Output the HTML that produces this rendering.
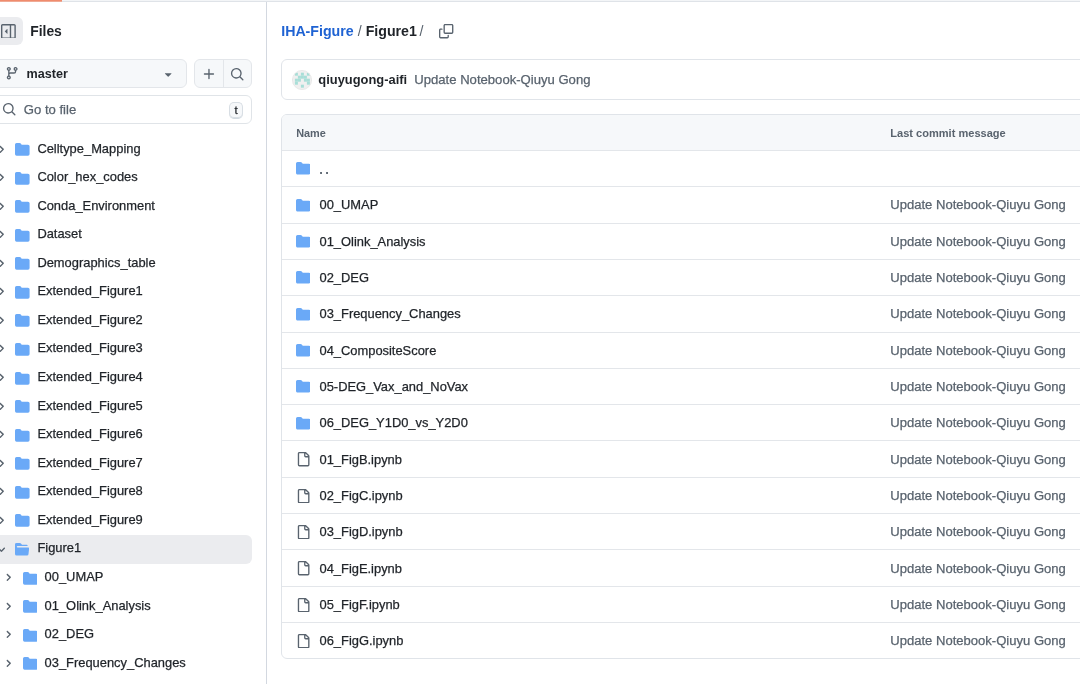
<!DOCTYPE html>
<html><head><meta charset="utf-8"><style>
html,body{margin:0;padding:0;background:#fff;width:1080px;height:684px;overflow:hidden}
body{position:relative;font-family:"Liberation Sans",sans-serif}
#root{position:absolute;left:0;top:0;width:1080px;height:684px;will-change:transform}
.t{position:absolute;white-space:nowrap}
.r{-webkit-text-stroke:0.25px currentColor}
</style></head><body>
<div id="root">
<div style="position:absolute;left:0;top:0;width:1080px;height:1px;background:#f3f5f7"></div>
<div style="position:absolute;left:0;top:1px;width:1080px;height:1px;background:#dfe3e8"></div>
<div style="position:absolute;left:0;top:0;width:62px;height:1px;background:#f08b6d"></div>
<div style="position:absolute;left:0;top:1px;width:62px;height:1px;background:#efaa95"></div>
<div style="position:absolute;left:266px;top:2px;width:1px;height:682px;background:#d3d8e0"></div>
<div style="position:absolute;left:-8px;top:17px;width:30.7px;height:28px;border-radius:6px;background:#ebecef"></div>
<svg style="position:absolute;left:1.1px;top:23.6px;width:14.8px;height:14.8px;fill:#59636e" viewBox="0 0 16 16"><path d="M4.177 7.823 6.573 5.427A.25.25 0 0 1 7 5.604v4.792a.25.25 0 0 1-.427.177L4.177 8.177a.25.25 0 0 1 0-.354Z"/><path d="M0 1.75C0 .784.784 0 1.75 0h12.5C15.216 0 16 .784 16 1.75v12.5A1.75 1.75 0 0 1 14.25 16H1.75A1.75 1.75 0 0 1 0 14.25Zm1.75-.25a.25.25 0 0 0-.25.25v12.5c0 .138.112.25.25.25H9.5v-13Zm12.5 13a.25.25 0 0 0 .25-.25V1.75a.25.25 0 0 0-.25-.25H11v13Z"/></svg>
<div class="t" style="left:30.2px;top:21.0px;height:20px;line-height:20px;font-size:13.9px;font-weight:700;color:#1f2328;">Files</div>
<div style="position:absolute;left:-10px;top:59px;width:197px;height:29px;box-sizing:border-box;border:1px solid #e3e6ea;border-radius:6px;background:#f6f8fa"></div>
<svg style="position:absolute;left:5.2px;top:66.2px;width:14.4px;height:14.4px;fill:#59636e" viewBox="0 0 16 16"><path d="M9.5 3.25a2.25 2.25 0 1 1 3 2.122V6A2.5 2.5 0 0 1 10 8.5H6a1 1 0 0 0-1 1v1.128a2.251 2.251 0 1 1-1.5 0V5.372a2.25 2.25 0 1 1 1.5 0v1.836A2.493 2.493 0 0 1 6 7h4a1 1 0 0 0 1-1v-.628A2.25 2.25 0 0 1 9.5 3.25Zm-6 0a.75.75 0 1 0 1.5 0 .75.75 0 0 0-1.5 0Zm8.25-.75a.75.75 0 1 0 0 1.5.75.75 0 0 0 0-1.5ZM4.25 12a.75.75 0 1 0 0 1.5.75.75 0 0 0 0-1.5Z"/></svg>
<div class="t" style="left:26.6px;top:64.0px;height:20px;line-height:20px;font-size:12.6px;font-weight:700;color:#1f2328;">master</div>
<svg style="position:absolute;left:161.2px;top:67px;width:14.4px;height:14.4px;fill:#59636e" viewBox="0 0 16 16"><path d="m4.427 7.427 3.396 3.396a.25.25 0 0 0 .354 0l3.396-3.396A.25.25 0 0 0 11.396 7H4.604a.25.25 0 0 0-.177.427Z"/></svg>
<div style="position:absolute;left:194px;top:59px;width:58px;height:29px;box-sizing:border-box;border:1px solid #e3e6ea;border-radius:6px;background:#f6f8fa"></div>
<div style="position:absolute;left:223px;top:60px;width:1px;height:27px;background:#e3e6ea"></div>
<svg style="position:absolute;left:202px;top:66.8px;width:14.4px;height:14.4px;fill:#59636e" viewBox="0 0 16 16"><path d="M7.75 2a.75.75 0 0 1 .75.75V7h4.25a.75.75 0 0 1 0 1.5H8.5v4.25a.75.75 0 0 1-1.5 0V8.5H2.75a.75.75 0 0 1 0-1.5H7V2.75A.75.75 0 0 1 7.75 2Z"/></svg>
<svg style="position:absolute;left:229.5px;top:66.5px;width:14.4px;height:14.4px;fill:#59636e" viewBox="0 0 16 16"><path d="M10.68 11.74a6 6 0 0 1-7.922-8.982 6 6 0 0 1 8.982 7.922l3.04 3.04a.749.749 0 0 1-.326 1.275.749.749 0 0 1-.734-.215ZM11.5 7a4.499 4.499 0 1 0-8.997 0A4.499 4.499 0 0 0 11.5 7Z"/></svg>
<div style="position:absolute;left:-10px;top:95px;width:262px;height:29px;box-sizing:border-box;border:1px solid #e0e4e8;border-radius:6px;background:#fff"></div>
<svg style="position:absolute;left:1.6px;top:102.2px;width:14.4px;height:14.4px;fill:#59636e" viewBox="0 0 16 16"><path d="M10.68 11.74a6 6 0 0 1-7.922-8.982 6 6 0 0 1 8.982 7.922l3.04 3.04a.749.749 0 0 1-.326 1.275.749.749 0 0 1-.734-.215ZM11.5 7a4.499 4.499 0 1 0-8.997 0A4.499 4.499 0 0 0 11.5 7Z"/></svg>
<div class="t r" style="left:23.8px;top:99.5px;height:20px;line-height:20px;font-size:13.1px;font-weight:400;color:#59636e;">Go to file</div>
<div style="position:absolute;left:228.8px;top:102px;width:14.5px;height:16.5px;box-sizing:border-box;border:1px solid #d8dee4;border-bottom-color:#d1d9e0;border-radius:5px;background:#f6f8fa;box-shadow:inset 0 -1px 0 #d8dee4"></div>
<div class="t r" style="left:228.8px;top:102px;width:14.5px;height:17px;line-height:17px;text-align:center;font-size:11.5px;color:#1f2328;font-family:'Liberation Sans',sans-serif">t</div>
<svg style="position:absolute;left:-4.5px;top:143.5px;width:10.8px;height:10.8px;fill:#59636e" viewBox="0 0 12 12"><path d="M4.7 10c-.2 0-.4-.1-.5-.2-.3-.3-.3-.8 0-1.1L6.9 6 4.2 3.3c-.3-.3-.3-.8 0-1.1.3-.3.8-.3 1.1 0l3.3 3.2c.3.3.3.8 0 1.1L5.3 9.7c-.2.2-.4.3-.6.3Z"/></svg>
<svg style="position:absolute;left:15.3px;top:142.0px;width:14.6px;height:14.6px;fill:#6aa9f7" viewBox="0 0 16 16"><path d="M1.75 1A1.75 1.75 0 0 0 0 2.75v10.5C0 14.216.784 15 1.75 15h12.5A1.75 1.75 0 0 0 16 13.25v-8.5A1.75 1.75 0 0 0 14.25 3H7.5a.25.25 0 0 1-.2-.1l-.9-1.2C6.07 1.26 5.55 1 5 1H1.75Z"/></svg>
<div class="t r" style="left:37.4px;top:138.5px;height:20px;line-height:20px;font-size:12.9px;font-weight:400;color:#1f2328;">Celltype_Mapping</div>
<svg style="position:absolute;left:-4.5px;top:172.07px;width:10.8px;height:10.8px;fill:#59636e" viewBox="0 0 12 12"><path d="M4.7 10c-.2 0-.4-.1-.5-.2-.3-.3-.3-.8 0-1.1L6.9 6 4.2 3.3c-.3-.3-.3-.8 0-1.1.3-.3.8-.3 1.1 0l3.3 3.2c.3.3.3.8 0 1.1L5.3 9.7c-.2.2-.4.3-.6.3Z"/></svg>
<svg style="position:absolute;left:15.3px;top:170.57px;width:14.6px;height:14.6px;fill:#6aa9f7" viewBox="0 0 16 16"><path d="M1.75 1A1.75 1.75 0 0 0 0 2.75v10.5C0 14.216.784 15 1.75 15h12.5A1.75 1.75 0 0 0 16 13.25v-8.5A1.75 1.75 0 0 0 14.25 3H7.5a.25.25 0 0 1-.2-.1l-.9-1.2C6.07 1.26 5.55 1 5 1H1.75Z"/></svg>
<div class="t r" style="left:37.4px;top:167.07px;height:20px;line-height:20px;font-size:12.9px;font-weight:400;color:#1f2328;">Color_hex_codes</div>
<svg style="position:absolute;left:-4.5px;top:200.64000000000001px;width:10.8px;height:10.8px;fill:#59636e" viewBox="0 0 12 12"><path d="M4.7 10c-.2 0-.4-.1-.5-.2-.3-.3-.3-.8 0-1.1L6.9 6 4.2 3.3c-.3-.3-.3-.8 0-1.1.3-.3.8-.3 1.1 0l3.3 3.2c.3.3.3.8 0 1.1L5.3 9.7c-.2.2-.4.3-.6.3Z"/></svg>
<svg style="position:absolute;left:15.3px;top:199.14000000000001px;width:14.6px;height:14.6px;fill:#6aa9f7" viewBox="0 0 16 16"><path d="M1.75 1A1.75 1.75 0 0 0 0 2.75v10.5C0 14.216.784 15 1.75 15h12.5A1.75 1.75 0 0 0 16 13.25v-8.5A1.75 1.75 0 0 0 14.25 3H7.5a.25.25 0 0 1-.2-.1l-.9-1.2C6.07 1.26 5.55 1 5 1H1.75Z"/></svg>
<div class="t r" style="left:37.4px;top:195.64000000000001px;height:20px;line-height:20px;font-size:12.9px;font-weight:400;color:#1f2328;">Conda_Environment</div>
<svg style="position:absolute;left:-4.5px;top:229.21px;width:10.8px;height:10.8px;fill:#59636e" viewBox="0 0 12 12"><path d="M4.7 10c-.2 0-.4-.1-.5-.2-.3-.3-.3-.8 0-1.1L6.9 6 4.2 3.3c-.3-.3-.3-.8 0-1.1.3-.3.8-.3 1.1 0l3.3 3.2c.3.3.3.8 0 1.1L5.3 9.7c-.2.2-.4.3-.6.3Z"/></svg>
<svg style="position:absolute;left:15.3px;top:227.71px;width:14.6px;height:14.6px;fill:#6aa9f7" viewBox="0 0 16 16"><path d="M1.75 1A1.75 1.75 0 0 0 0 2.75v10.5C0 14.216.784 15 1.75 15h12.5A1.75 1.75 0 0 0 16 13.25v-8.5A1.75 1.75 0 0 0 14.25 3H7.5a.25.25 0 0 1-.2-.1l-.9-1.2C6.07 1.26 5.55 1 5 1H1.75Z"/></svg>
<div class="t r" style="left:37.4px;top:224.21px;height:20px;line-height:20px;font-size:12.9px;font-weight:400;color:#1f2328;">Dataset</div>
<svg style="position:absolute;left:-4.5px;top:257.78000000000003px;width:10.8px;height:10.8px;fill:#59636e" viewBox="0 0 12 12"><path d="M4.7 10c-.2 0-.4-.1-.5-.2-.3-.3-.3-.8 0-1.1L6.9 6 4.2 3.3c-.3-.3-.3-.8 0-1.1.3-.3.8-.3 1.1 0l3.3 3.2c.3.3.3.8 0 1.1L5.3 9.7c-.2.2-.4.3-.6.3Z"/></svg>
<svg style="position:absolute;left:15.3px;top:256.28000000000003px;width:14.6px;height:14.6px;fill:#6aa9f7" viewBox="0 0 16 16"><path d="M1.75 1A1.75 1.75 0 0 0 0 2.75v10.5C0 14.216.784 15 1.75 15h12.5A1.75 1.75 0 0 0 16 13.25v-8.5A1.75 1.75 0 0 0 14.25 3H7.5a.25.25 0 0 1-.2-.1l-.9-1.2C6.07 1.26 5.55 1 5 1H1.75Z"/></svg>
<div class="t r" style="left:37.4px;top:252.78000000000003px;height:20px;line-height:20px;font-size:12.9px;font-weight:400;color:#1f2328;">Demographics_table</div>
<svg style="position:absolute;left:-4.5px;top:286.35px;width:10.8px;height:10.8px;fill:#59636e" viewBox="0 0 12 12"><path d="M4.7 10c-.2 0-.4-.1-.5-.2-.3-.3-.3-.8 0-1.1L6.9 6 4.2 3.3c-.3-.3-.3-.8 0-1.1.3-.3.8-.3 1.1 0l3.3 3.2c.3.3.3.8 0 1.1L5.3 9.7c-.2.2-.4.3-.6.3Z"/></svg>
<svg style="position:absolute;left:15.3px;top:284.85px;width:14.6px;height:14.6px;fill:#6aa9f7" viewBox="0 0 16 16"><path d="M1.75 1A1.75 1.75 0 0 0 0 2.75v10.5C0 14.216.784 15 1.75 15h12.5A1.75 1.75 0 0 0 16 13.25v-8.5A1.75 1.75 0 0 0 14.25 3H7.5a.25.25 0 0 1-.2-.1l-.9-1.2C6.07 1.26 5.55 1 5 1H1.75Z"/></svg>
<div class="t r" style="left:37.4px;top:281.35px;height:20px;line-height:20px;font-size:12.9px;font-weight:400;color:#1f2328;">Extended_Figure1</div>
<svg style="position:absolute;left:-4.5px;top:314.9200000000001px;width:10.8px;height:10.8px;fill:#59636e" viewBox="0 0 12 12"><path d="M4.7 10c-.2 0-.4-.1-.5-.2-.3-.3-.3-.8 0-1.1L6.9 6 4.2 3.3c-.3-.3-.3-.8 0-1.1.3-.3.8-.3 1.1 0l3.3 3.2c.3.3.3.8 0 1.1L5.3 9.7c-.2.2-.4.3-.6.3Z"/></svg>
<svg style="position:absolute;left:15.3px;top:313.4200000000001px;width:14.6px;height:14.6px;fill:#6aa9f7" viewBox="0 0 16 16"><path d="M1.75 1A1.75 1.75 0 0 0 0 2.75v10.5C0 14.216.784 15 1.75 15h12.5A1.75 1.75 0 0 0 16 13.25v-8.5A1.75 1.75 0 0 0 14.25 3H7.5a.25.25 0 0 1-.2-.1l-.9-1.2C6.07 1.26 5.55 1 5 1H1.75Z"/></svg>
<div class="t r" style="left:37.4px;top:309.9200000000001px;height:20px;line-height:20px;font-size:12.9px;font-weight:400;color:#1f2328;">Extended_Figure2</div>
<svg style="position:absolute;left:-4.5px;top:343.49px;width:10.8px;height:10.8px;fill:#59636e" viewBox="0 0 12 12"><path d="M4.7 10c-.2 0-.4-.1-.5-.2-.3-.3-.3-.8 0-1.1L6.9 6 4.2 3.3c-.3-.3-.3-.8 0-1.1.3-.3.8-.3 1.1 0l3.3 3.2c.3.3.3.8 0 1.1L5.3 9.7c-.2.2-.4.3-.6.3Z"/></svg>
<svg style="position:absolute;left:15.3px;top:341.99px;width:14.6px;height:14.6px;fill:#6aa9f7" viewBox="0 0 16 16"><path d="M1.75 1A1.75 1.75 0 0 0 0 2.75v10.5C0 14.216.784 15 1.75 15h12.5A1.75 1.75 0 0 0 16 13.25v-8.5A1.75 1.75 0 0 0 14.25 3H7.5a.25.25 0 0 1-.2-.1l-.9-1.2C6.07 1.26 5.55 1 5 1H1.75Z"/></svg>
<div class="t r" style="left:37.4px;top:338.49px;height:20px;line-height:20px;font-size:12.9px;font-weight:400;color:#1f2328;">Extended_Figure3</div>
<svg style="position:absolute;left:-4.5px;top:372.06000000000006px;width:10.8px;height:10.8px;fill:#59636e" viewBox="0 0 12 12"><path d="M4.7 10c-.2 0-.4-.1-.5-.2-.3-.3-.3-.8 0-1.1L6.9 6 4.2 3.3c-.3-.3-.3-.8 0-1.1.3-.3.8-.3 1.1 0l3.3 3.2c.3.3.3.8 0 1.1L5.3 9.7c-.2.2-.4.3-.6.3Z"/></svg>
<svg style="position:absolute;left:15.3px;top:370.56000000000006px;width:14.6px;height:14.6px;fill:#6aa9f7" viewBox="0 0 16 16"><path d="M1.75 1A1.75 1.75 0 0 0 0 2.75v10.5C0 14.216.784 15 1.75 15h12.5A1.75 1.75 0 0 0 16 13.25v-8.5A1.75 1.75 0 0 0 14.25 3H7.5a.25.25 0 0 1-.2-.1l-.9-1.2C6.07 1.26 5.55 1 5 1H1.75Z"/></svg>
<div class="t r" style="left:37.4px;top:367.06000000000006px;height:20px;line-height:20px;font-size:12.9px;font-weight:400;color:#1f2328;">Extended_Figure4</div>
<svg style="position:absolute;left:-4.5px;top:400.63px;width:10.8px;height:10.8px;fill:#59636e" viewBox="0 0 12 12"><path d="M4.7 10c-.2 0-.4-.1-.5-.2-.3-.3-.3-.8 0-1.1L6.9 6 4.2 3.3c-.3-.3-.3-.8 0-1.1.3-.3.8-.3 1.1 0l3.3 3.2c.3.3.3.8 0 1.1L5.3 9.7c-.2.2-.4.3-.6.3Z"/></svg>
<svg style="position:absolute;left:15.3px;top:399.13px;width:14.6px;height:14.6px;fill:#6aa9f7" viewBox="0 0 16 16"><path d="M1.75 1A1.75 1.75 0 0 0 0 2.75v10.5C0 14.216.784 15 1.75 15h12.5A1.75 1.75 0 0 0 16 13.25v-8.5A1.75 1.75 0 0 0 14.25 3H7.5a.25.25 0 0 1-.2-.1l-.9-1.2C6.07 1.26 5.55 1 5 1H1.75Z"/></svg>
<div class="t r" style="left:37.4px;top:395.63px;height:20px;line-height:20px;font-size:12.9px;font-weight:400;color:#1f2328;">Extended_Figure5</div>
<svg style="position:absolute;left:-4.5px;top:429.20000000000005px;width:10.8px;height:10.8px;fill:#59636e" viewBox="0 0 12 12"><path d="M4.7 10c-.2 0-.4-.1-.5-.2-.3-.3-.3-.8 0-1.1L6.9 6 4.2 3.3c-.3-.3-.3-.8 0-1.1.3-.3.8-.3 1.1 0l3.3 3.2c.3.3.3.8 0 1.1L5.3 9.7c-.2.2-.4.3-.6.3Z"/></svg>
<svg style="position:absolute;left:15.3px;top:427.70000000000005px;width:14.6px;height:14.6px;fill:#6aa9f7" viewBox="0 0 16 16"><path d="M1.75 1A1.75 1.75 0 0 0 0 2.75v10.5C0 14.216.784 15 1.75 15h12.5A1.75 1.75 0 0 0 16 13.25v-8.5A1.75 1.75 0 0 0 14.25 3H7.5a.25.25 0 0 1-.2-.1l-.9-1.2C6.07 1.26 5.55 1 5 1H1.75Z"/></svg>
<div class="t r" style="left:37.4px;top:424.20000000000005px;height:20px;line-height:20px;font-size:12.9px;font-weight:400;color:#1f2328;">Extended_Figure6</div>
<svg style="position:absolute;left:-4.5px;top:457.77px;width:10.8px;height:10.8px;fill:#59636e" viewBox="0 0 12 12"><path d="M4.7 10c-.2 0-.4-.1-.5-.2-.3-.3-.3-.8 0-1.1L6.9 6 4.2 3.3c-.3-.3-.3-.8 0-1.1.3-.3.8-.3 1.1 0l3.3 3.2c.3.3.3.8 0 1.1L5.3 9.7c-.2.2-.4.3-.6.3Z"/></svg>
<svg style="position:absolute;left:15.3px;top:456.27px;width:14.6px;height:14.6px;fill:#6aa9f7" viewBox="0 0 16 16"><path d="M1.75 1A1.75 1.75 0 0 0 0 2.75v10.5C0 14.216.784 15 1.75 15h12.5A1.75 1.75 0 0 0 16 13.25v-8.5A1.75 1.75 0 0 0 14.25 3H7.5a.25.25 0 0 1-.2-.1l-.9-1.2C6.07 1.26 5.55 1 5 1H1.75Z"/></svg>
<div class="t r" style="left:37.4px;top:452.77px;height:20px;line-height:20px;font-size:12.9px;font-weight:400;color:#1f2328;">Extended_Figure7</div>
<svg style="position:absolute;left:-4.5px;top:486.34000000000003px;width:10.8px;height:10.8px;fill:#59636e" viewBox="0 0 12 12"><path d="M4.7 10c-.2 0-.4-.1-.5-.2-.3-.3-.3-.8 0-1.1L6.9 6 4.2 3.3c-.3-.3-.3-.8 0-1.1.3-.3.8-.3 1.1 0l3.3 3.2c.3.3.3.8 0 1.1L5.3 9.7c-.2.2-.4.3-.6.3Z"/></svg>
<svg style="position:absolute;left:15.3px;top:484.84000000000003px;width:14.6px;height:14.6px;fill:#6aa9f7" viewBox="0 0 16 16"><path d="M1.75 1A1.75 1.75 0 0 0 0 2.75v10.5C0 14.216.784 15 1.75 15h12.5A1.75 1.75 0 0 0 16 13.25v-8.5A1.75 1.75 0 0 0 14.25 3H7.5a.25.25 0 0 1-.2-.1l-.9-1.2C6.07 1.26 5.55 1 5 1H1.75Z"/></svg>
<div class="t r" style="left:37.4px;top:481.34000000000003px;height:20px;line-height:20px;font-size:12.9px;font-weight:400;color:#1f2328;">Extended_Figure8</div>
<svg style="position:absolute;left:-4.5px;top:514.9100000000001px;width:10.8px;height:10.8px;fill:#59636e" viewBox="0 0 12 12"><path d="M4.7 10c-.2 0-.4-.1-.5-.2-.3-.3-.3-.8 0-1.1L6.9 6 4.2 3.3c-.3-.3-.3-.8 0-1.1.3-.3.8-.3 1.1 0l3.3 3.2c.3.3.3.8 0 1.1L5.3 9.7c-.2.2-.4.3-.6.3Z"/></svg>
<svg style="position:absolute;left:15.3px;top:513.4100000000001px;width:14.6px;height:14.6px;fill:#6aa9f7" viewBox="0 0 16 16"><path d="M1.75 1A1.75 1.75 0 0 0 0 2.75v10.5C0 14.216.784 15 1.75 15h12.5A1.75 1.75 0 0 0 16 13.25v-8.5A1.75 1.75 0 0 0 14.25 3H7.5a.25.25 0 0 1-.2-.1l-.9-1.2C6.07 1.26 5.55 1 5 1H1.75Z"/></svg>
<div class="t r" style="left:37.4px;top:509.9100000000001px;height:20px;line-height:20px;font-size:12.9px;font-weight:400;color:#1f2328;">Extended_Figure9</div>
<div style="position:absolute;left:-8px;top:535px;width:259.5px;height:29px;border-radius:6px;background:#ebecef"></div>
<svg style="position:absolute;left:-3.7px;top:544.08px;width:10.8px;height:10.8px;fill:#59636e" viewBox="0 0 12 12"><path d="M6 8.825c-.2 0-.4-.1-.5-.2l-3.3-3.3c-.3-.3-.3-.8 0-1.1.3-.3.8-.3 1.1 0l2.7 2.7 2.7-2.7c.3-.3.8-.3 1.1 0 .3.3.3.8 0 1.1l-3.2 3.2c-.2.2-.4.3-.6.3Z"/></svg>
<svg style="position:absolute;left:15.1px;top:542.48px;width:14.4px;height:14.4px;fill:#6aa9f7" viewBox="0 0 16 16"><path d="M.513 1.513A1.75 1.75 0 0 1 1.75 1h3.5c.55 0 1.07.26 1.4.7l.9 1.2a.25.25 0 0 0 .2.1H13a1 1 0 0 1 1 1v.5H2.75a.75.75 0 0 0 0 1.5h11.978a1 1 0 0 1 .994 1.117L15 13.25A1.75 1.75 0 0 1 13.25 15H1.75A1.75 1.75 0 0 1 0 13.25V2.75c0-.464.184-.91.513-1.237Z"/></svg>
<div class="t r" style="left:37.4px;top:538.48px;height:20px;line-height:20px;font-size:12.9px;font-weight:400;color:#1f2328;">Figure1</div>
<svg style="position:absolute;left:2.8px;top:572.0500000000001px;width:10.8px;height:10.8px;fill:#59636e" viewBox="0 0 12 12"><path d="M4.7 10c-.2 0-.4-.1-.5-.2-.3-.3-.3-.8 0-1.1L6.9 6 4.2 3.3c-.3-.3-.3-.8 0-1.1.3-.3.8-.3 1.1 0l3.3 3.2c.3.3.3.8 0 1.1L5.3 9.7c-.2.2-.4.3-.6.3Z"/></svg>
<svg style="position:absolute;left:22.9px;top:570.5500000000001px;width:14.6px;height:14.6px;fill:#6aa9f7" viewBox="0 0 16 16"><path d="M1.75 1A1.75 1.75 0 0 0 0 2.75v10.5C0 14.216.784 15 1.75 15h12.5A1.75 1.75 0 0 0 16 13.25v-8.5A1.75 1.75 0 0 0 14.25 3H7.5a.25.25 0 0 1-.2-.1l-.9-1.2C6.07 1.26 5.55 1 5 1H1.75Z"/></svg>
<div class="t r" style="left:44.6px;top:567.0500000000001px;height:20px;line-height:20px;font-size:12.9px;font-weight:400;color:#1f2328;">00_UMAP</div>
<svg style="position:absolute;left:2.8px;top:600.62px;width:10.8px;height:10.8px;fill:#59636e" viewBox="0 0 12 12"><path d="M4.7 10c-.2 0-.4-.1-.5-.2-.3-.3-.3-.8 0-1.1L6.9 6 4.2 3.3c-.3-.3-.3-.8 0-1.1.3-.3.8-.3 1.1 0l3.3 3.2c.3.3.3.8 0 1.1L5.3 9.7c-.2.2-.4.3-.6.3Z"/></svg>
<svg style="position:absolute;left:22.9px;top:599.12px;width:14.6px;height:14.6px;fill:#6aa9f7" viewBox="0 0 16 16"><path d="M1.75 1A1.75 1.75 0 0 0 0 2.75v10.5C0 14.216.784 15 1.75 15h12.5A1.75 1.75 0 0 0 16 13.25v-8.5A1.75 1.75 0 0 0 14.25 3H7.5a.25.25 0 0 1-.2-.1l-.9-1.2C6.07 1.26 5.55 1 5 1H1.75Z"/></svg>
<div class="t r" style="left:44.6px;top:595.62px;height:20px;line-height:20px;font-size:12.9px;font-weight:400;color:#1f2328;">01_Olink_Analysis</div>
<svg style="position:absolute;left:2.8px;top:629.19px;width:10.8px;height:10.8px;fill:#59636e" viewBox="0 0 12 12"><path d="M4.7 10c-.2 0-.4-.1-.5-.2-.3-.3-.3-.8 0-1.1L6.9 6 4.2 3.3c-.3-.3-.3-.8 0-1.1.3-.3.8-.3 1.1 0l3.3 3.2c.3.3.3.8 0 1.1L5.3 9.7c-.2.2-.4.3-.6.3Z"/></svg>
<svg style="position:absolute;left:22.9px;top:627.69px;width:14.6px;height:14.6px;fill:#6aa9f7" viewBox="0 0 16 16"><path d="M1.75 1A1.75 1.75 0 0 0 0 2.75v10.5C0 14.216.784 15 1.75 15h12.5A1.75 1.75 0 0 0 16 13.25v-8.5A1.75 1.75 0 0 0 14.25 3H7.5a.25.25 0 0 1-.2-.1l-.9-1.2C6.07 1.26 5.55 1 5 1H1.75Z"/></svg>
<div class="t r" style="left:44.6px;top:624.19px;height:20px;line-height:20px;font-size:12.9px;font-weight:400;color:#1f2328;">02_DEG</div>
<svg style="position:absolute;left:2.8px;top:657.76px;width:10.8px;height:10.8px;fill:#59636e" viewBox="0 0 12 12"><path d="M4.7 10c-.2 0-.4-.1-.5-.2-.3-.3-.3-.8 0-1.1L6.9 6 4.2 3.3c-.3-.3-.3-.8 0-1.1.3-.3.8-.3 1.1 0l3.3 3.2c.3.3.3.8 0 1.1L5.3 9.7c-.2.2-.4.3-.6.3Z"/></svg>
<svg style="position:absolute;left:22.9px;top:656.26px;width:14.6px;height:14.6px;fill:#6aa9f7" viewBox="0 0 16 16"><path d="M1.75 1A1.75 1.75 0 0 0 0 2.75v10.5C0 14.216.784 15 1.75 15h12.5A1.75 1.75 0 0 0 16 13.25v-8.5A1.75 1.75 0 0 0 14.25 3H7.5a.25.25 0 0 1-.2-.1l-.9-1.2C6.07 1.26 5.55 1 5 1H1.75Z"/></svg>
<div class="t r" style="left:44.6px;top:652.76px;height:20px;line-height:20px;font-size:12.9px;font-weight:400;color:#1f2328;">03_Frequency_Changes</div>
<div class="t" style="left:281.2px;top:21.0px;height:20px;line-height:20px;font-size:14.2px;font-weight:700;color:#1f2328;"><span style="color:#1f63d3">IHA-Figure</span><span style="font-weight:400;color:#59636e;padding:0 4px">/</span>Figure1<span style="font-weight:400;color:#59636e;padding:0 0 0 2.5px">/</span></div>
<svg style="position:absolute;left:439.4px;top:24.2px;width:14.4px;height:14.4px;fill:#59636e" viewBox="0 0 16 16"><path d="M0 6.75C0 5.784.784 5 1.75 5h1.5a.75.75 0 0 1 0 1.5h-1.5a.25.25 0 0 0-.25.25v7.5c0 .138.112.25.25.25h7.5a.25.25 0 0 0 .25-.25v-1.5a.75.75 0 0 1 1.5 0v1.5A1.75 1.75 0 0 1 9.25 16h-7.5A1.75 1.75 0 0 1 0 14.25Z"/><path d="M5 1.75C5 .784 5.784 0 6.75 0h7.5C15.216 0 16 .784 16 1.75v7.5A1.75 1.75 0 0 1 14.25 11h-7.5A1.75 1.75 0 0 1 5 9.25Zm1.75-.25a.25.25 0 0 0-.25.25v7.5c0 .138.112.25.25.25h7.5a.25.25 0 0 0 .25-.25v-7.5a.25.25 0 0 0-.25-.25Z"/></svg>
<div style="position:absolute;left:281px;top:59px;width:820px;height:41px;box-sizing:border-box;border:1px solid #e0e4e9;border-radius:6px;background:#fff"></div>
<svg style="position:absolute;left:292px;top:70.2px;width:20px;height:20px" viewBox="0 0 20 20"><defs><clipPath id="cc"><circle cx="10" cy="10" r="9.6"/></clipPath></defs><g clip-path="url(#cc)"><rect width="20" height="20" fill="#f0f0f0"/><g transform="translate(2.9 2.7)" fill="#a9ded8"><rect x="0" y="0" width="3" height="3"/><rect x="6" y="0" width="3" height="3"/><rect x="12" y="0" width="3" height="3"/><rect x="3" y="3" width="3" height="3"/><rect x="6" y="3" width="3" height="3"/><rect x="9" y="3" width="3" height="3"/><rect x="0" y="6" width="3" height="3"/><rect x="3" y="6" width="3" height="3"/><rect x="9" y="6" width="3" height="3"/><rect x="12" y="6" width="3" height="3"/><rect x="0" y="9" width="3" height="3"/><rect x="12" y="9" width="3" height="3"/><rect x="6" y="12" width="3" height="3"/></g></g><circle cx="10" cy="10" r="9.6" fill="none" stroke="#e4e4e4" stroke-width="0.8"/></svg>
<div class="t" style="left:318.3px;top:70.0px;height:20px;line-height:20px;font-size:12.9px;font-weight:700;color:#1f2328;">qiuyugong-aifi</div>
<div class="t r" style="left:414.3px;top:70.0px;height:20px;line-height:20px;font-size:13.1px;font-weight:400;color:#59636e;">Update Notebook-Qiuyu Gong</div>
<div style="position:absolute;left:281.3px;top:114.2px;width:820px;height:545.18px;box-sizing:border-box;border:1px solid #e0e4e9;border-radius:6px;background:#fff;overflow:hidden"><div style="height:34.7px;background:#f6f8fa"></div></div>
<div class="t" style="left:296.2px;top:123.0px;height:20px;line-height:20px;font-size:10.9px;font-weight:700;color:#59636e;">Name</div>
<div class="t" style="left:890.3px;top:123.0px;height:20px;line-height:20px;font-size:11.05px;font-weight:700;color:#59636e;">Last commit message</div>
<div style="position:absolute;left:282px;top:149.90px;width:800px;height:1px;background:#e3e6ea"></div>
<svg style="position:absolute;left:296px;top:161.36px;width:14.4px;height:14.4px;fill:#6aa9f7" viewBox="0 0 16 16"><path d="M1.75 1A1.75 1.75 0 0 0 0 2.75v10.5C0 14.216.784 15 1.75 15h12.5A1.75 1.75 0 0 0 16 13.25v-8.5A1.75 1.75 0 0 0 14.25 3H7.5a.25.25 0 0 1-.2-.1l-.9-1.2C6.07 1.26 5.55 1 5 1H1.75Z"/></svg>
<div class="t" style="left:319.2px;top:159.76px;height:20px;line-height:20px;font-size:12.9px;font-weight:700;color:#59636e;">.&thinsp;.</div>
<div style="position:absolute;left:282px;top:186.22px;width:800px;height:1px;background:#e3e6ea"></div>
<svg style="position:absolute;left:296px;top:197.68px;width:14.4px;height:14.4px;fill:#6aa9f7" viewBox="0 0 16 16"><path d="M1.75 1A1.75 1.75 0 0 0 0 2.75v10.5C0 14.216.784 15 1.75 15h12.5A1.75 1.75 0 0 0 16 13.25v-8.5A1.75 1.75 0 0 0 14.25 3H7.5a.25.25 0 0 1-.2-.1l-.9-1.2C6.07 1.26 5.55 1 5 1H1.75Z"/></svg>
<div class="t r" style="left:319.5px;top:195.48px;height:20px;line-height:20px;font-size:12.9px;font-weight:400;color:#1f2328;">00_UMAP</div>
<div class="t r" style="left:890.3px;top:195.48px;height:20px;line-height:20px;font-size:13.05px;font-weight:400;color:#59636e;">Update Notebook-Qiuyu Gong</div>
<div style="position:absolute;left:282px;top:222.54px;width:800px;height:1px;background:#e3e6ea"></div>
<svg style="position:absolute;left:296px;top:234.00000000000003px;width:14.4px;height:14.4px;fill:#6aa9f7" viewBox="0 0 16 16"><path d="M1.75 1A1.75 1.75 0 0 0 0 2.75v10.5C0 14.216.784 15 1.75 15h12.5A1.75 1.75 0 0 0 16 13.25v-8.5A1.75 1.75 0 0 0 14.25 3H7.5a.25.25 0 0 1-.2-.1l-.9-1.2C6.07 1.26 5.55 1 5 1H1.75Z"/></svg>
<div class="t r" style="left:319.5px;top:231.8px;height:20px;line-height:20px;font-size:12.9px;font-weight:400;color:#1f2328;">01_Olink_Analysis</div>
<div class="t r" style="left:890.3px;top:231.8px;height:20px;line-height:20px;font-size:13.05px;font-weight:400;color:#59636e;">Update Notebook-Qiuyu Gong</div>
<div style="position:absolute;left:282px;top:258.86px;width:800px;height:1px;background:#e3e6ea"></div>
<svg style="position:absolute;left:296px;top:270.32000000000005px;width:14.4px;height:14.4px;fill:#6aa9f7" viewBox="0 0 16 16"><path d="M1.75 1A1.75 1.75 0 0 0 0 2.75v10.5C0 14.216.784 15 1.75 15h12.5A1.75 1.75 0 0 0 16 13.25v-8.5A1.75 1.75 0 0 0 14.25 3H7.5a.25.25 0 0 1-.2-.1l-.9-1.2C6.07 1.26 5.55 1 5 1H1.75Z"/></svg>
<div class="t r" style="left:319.5px;top:268.12000000000006px;height:20px;line-height:20px;font-size:12.9px;font-weight:400;color:#1f2328;">02_DEG</div>
<div class="t r" style="left:890.3px;top:268.12000000000006px;height:20px;line-height:20px;font-size:13.05px;font-weight:400;color:#59636e;">Update Notebook-Qiuyu Gong</div>
<div style="position:absolute;left:282px;top:295.18px;width:800px;height:1px;background:#e3e6ea"></div>
<svg style="position:absolute;left:296px;top:306.64000000000004px;width:14.4px;height:14.4px;fill:#6aa9f7" viewBox="0 0 16 16"><path d="M1.75 1A1.75 1.75 0 0 0 0 2.75v10.5C0 14.216.784 15 1.75 15h12.5A1.75 1.75 0 0 0 16 13.25v-8.5A1.75 1.75 0 0 0 14.25 3H7.5a.25.25 0 0 1-.2-.1l-.9-1.2C6.07 1.26 5.55 1 5 1H1.75Z"/></svg>
<div class="t r" style="left:319.5px;top:304.44000000000005px;height:20px;line-height:20px;font-size:12.9px;font-weight:400;color:#1f2328;">03_Frequency_Changes</div>
<div class="t r" style="left:890.3px;top:304.44000000000005px;height:20px;line-height:20px;font-size:13.05px;font-weight:400;color:#59636e;">Update Notebook-Qiuyu Gong</div>
<div style="position:absolute;left:282px;top:331.50px;width:800px;height:1px;background:#e3e6ea"></div>
<svg style="position:absolute;left:296px;top:342.96000000000004px;width:14.4px;height:14.4px;fill:#6aa9f7" viewBox="0 0 16 16"><path d="M1.75 1A1.75 1.75 0 0 0 0 2.75v10.5C0 14.216.784 15 1.75 15h12.5A1.75 1.75 0 0 0 16 13.25v-8.5A1.75 1.75 0 0 0 14.25 3H7.5a.25.25 0 0 1-.2-.1l-.9-1.2C6.07 1.26 5.55 1 5 1H1.75Z"/></svg>
<div class="t r" style="left:319.5px;top:340.76000000000005px;height:20px;line-height:20px;font-size:12.9px;font-weight:400;color:#1f2328;">04_CompositeScore</div>
<div class="t r" style="left:890.3px;top:340.76000000000005px;height:20px;line-height:20px;font-size:13.05px;font-weight:400;color:#59636e;">Update Notebook-Qiuyu Gong</div>
<div style="position:absolute;left:282px;top:367.82px;width:800px;height:1px;background:#e3e6ea"></div>
<svg style="position:absolute;left:296px;top:379.2800000000001px;width:14.4px;height:14.4px;fill:#6aa9f7" viewBox="0 0 16 16"><path d="M1.75 1A1.75 1.75 0 0 0 0 2.75v10.5C0 14.216.784 15 1.75 15h12.5A1.75 1.75 0 0 0 16 13.25v-8.5A1.75 1.75 0 0 0 14.25 3H7.5a.25.25 0 0 1-.2-.1l-.9-1.2C6.07 1.26 5.55 1 5 1H1.75Z"/></svg>
<div class="t r" style="left:319.5px;top:377.0800000000001px;height:20px;line-height:20px;font-size:12.9px;font-weight:400;color:#1f2328;">05-DEG_Vax_and_NoVax</div>
<div class="t r" style="left:890.3px;top:377.0800000000001px;height:20px;line-height:20px;font-size:13.05px;font-weight:400;color:#59636e;">Update Notebook-Qiuyu Gong</div>
<div style="position:absolute;left:282px;top:404.14px;width:800px;height:1px;background:#e3e6ea"></div>
<svg style="position:absolute;left:296px;top:415.6px;width:14.4px;height:14.4px;fill:#6aa9f7" viewBox="0 0 16 16"><path d="M1.75 1A1.75 1.75 0 0 0 0 2.75v10.5C0 14.216.784 15 1.75 15h12.5A1.75 1.75 0 0 0 16 13.25v-8.5A1.75 1.75 0 0 0 14.25 3H7.5a.25.25 0 0 1-.2-.1l-.9-1.2C6.07 1.26 5.55 1 5 1H1.75Z"/></svg>
<div class="t r" style="left:319.5px;top:413.40000000000003px;height:20px;line-height:20px;font-size:12.9px;font-weight:400;color:#1f2328;">06_DEG_Y1D0_vs_Y2D0</div>
<div class="t r" style="left:890.3px;top:413.40000000000003px;height:20px;line-height:20px;font-size:13.05px;font-weight:400;color:#59636e;">Update Notebook-Qiuyu Gong</div>
<div style="position:absolute;left:282px;top:440.46px;width:800px;height:1px;background:#e3e6ea"></div>
<svg style="position:absolute;left:296px;top:452.2200000000001px;width:14.4px;height:14.4px;fill:#59636e" viewBox="0 0 16 16"><path d="M2 1.75C2 .784 2.784 0 3.75 0h6.586c.464 0 .909.184 1.237.513l2.914 2.914c.329.328.513.773.513 1.237v9.586A1.75 1.75 0 0 1 13.25 16h-9.5A1.75 1.75 0 0 1 2 14.25Zm1.75-.25a.25.25 0 0 0-.25.25v12.5c0 .138.112.25.25.25h9.5a.25.25 0 0 0 .25-.25V6h-2.75A1.75 1.75 0 0 1 9 4.25V1.5Zm6.75.062V4.25c0 .138.112.25.25.25h2.688l-.011-.013-2.914-2.914-.013-.011Z"/></svg>
<div class="t r" style="left:319.5px;top:449.7200000000001px;height:20px;line-height:20px;font-size:12.9px;font-weight:400;color:#1f2328;">01_FigB.ipynb</div>
<div class="t r" style="left:890.3px;top:449.7200000000001px;height:20px;line-height:20px;font-size:13.05px;font-weight:400;color:#59636e;">Update Notebook-Qiuyu Gong</div>
<div style="position:absolute;left:282px;top:476.78px;width:800px;height:1px;background:#e3e6ea"></div>
<svg style="position:absolute;left:296px;top:488.54px;width:14.4px;height:14.4px;fill:#59636e" viewBox="0 0 16 16"><path d="M2 1.75C2 .784 2.784 0 3.75 0h6.586c.464 0 .909.184 1.237.513l2.914 2.914c.329.328.513.773.513 1.237v9.586A1.75 1.75 0 0 1 13.25 16h-9.5A1.75 1.75 0 0 1 2 14.25Zm1.75-.25a.25.25 0 0 0-.25.25v12.5c0 .138.112.25.25.25h9.5a.25.25 0 0 0 .25-.25V6h-2.75A1.75 1.75 0 0 1 9 4.25V1.5Zm6.75.062V4.25c0 .138.112.25.25.25h2.688l-.011-.013-2.914-2.914-.013-.011Z"/></svg>
<div class="t r" style="left:319.5px;top:486.04px;height:20px;line-height:20px;font-size:12.9px;font-weight:400;color:#1f2328;">02_FigC.ipynb</div>
<div class="t r" style="left:890.3px;top:486.04px;height:20px;line-height:20px;font-size:13.05px;font-weight:400;color:#59636e;">Update Notebook-Qiuyu Gong</div>
<div style="position:absolute;left:282px;top:513.10px;width:800px;height:1px;background:#e3e6ea"></div>
<svg style="position:absolute;left:296px;top:524.86px;width:14.4px;height:14.4px;fill:#59636e" viewBox="0 0 16 16"><path d="M2 1.75C2 .784 2.784 0 3.75 0h6.586c.464 0 .909.184 1.237.513l2.914 2.914c.329.328.513.773.513 1.237v9.586A1.75 1.75 0 0 1 13.25 16h-9.5A1.75 1.75 0 0 1 2 14.25Zm1.75-.25a.25.25 0 0 0-.25.25v12.5c0 .138.112.25.25.25h9.5a.25.25 0 0 0 .25-.25V6h-2.75A1.75 1.75 0 0 1 9 4.25V1.5Zm6.75.062V4.25c0 .138.112.25.25.25h2.688l-.011-.013-2.914-2.914-.013-.011Z"/></svg>
<div class="t r" style="left:319.5px;top:522.36px;height:20px;line-height:20px;font-size:12.9px;font-weight:400;color:#1f2328;">03_FigD.ipynb</div>
<div class="t r" style="left:890.3px;top:522.36px;height:20px;line-height:20px;font-size:13.05px;font-weight:400;color:#59636e;">Update Notebook-Qiuyu Gong</div>
<div style="position:absolute;left:282px;top:549.42px;width:800px;height:1px;background:#e3e6ea"></div>
<svg style="position:absolute;left:296px;top:561.18px;width:14.4px;height:14.4px;fill:#59636e" viewBox="0 0 16 16"><path d="M2 1.75C2 .784 2.784 0 3.75 0h6.586c.464 0 .909.184 1.237.513l2.914 2.914c.329.328.513.773.513 1.237v9.586A1.75 1.75 0 0 1 13.25 16h-9.5A1.75 1.75 0 0 1 2 14.25Zm1.75-.25a.25.25 0 0 0-.25.25v12.5c0 .138.112.25.25.25h9.5a.25.25 0 0 0 .25-.25V6h-2.75A1.75 1.75 0 0 1 9 4.25V1.5Zm6.75.062V4.25c0 .138.112.25.25.25h2.688l-.011-.013-2.914-2.914-.013-.011Z"/></svg>
<div class="t r" style="left:319.5px;top:558.68px;height:20px;line-height:20px;font-size:12.9px;font-weight:400;color:#1f2328;">04_FigE.ipynb</div>
<div class="t r" style="left:890.3px;top:558.68px;height:20px;line-height:20px;font-size:13.05px;font-weight:400;color:#59636e;">Update Notebook-Qiuyu Gong</div>
<div style="position:absolute;left:282px;top:585.74px;width:800px;height:1px;background:#e3e6ea"></div>
<svg style="position:absolute;left:296px;top:597.5px;width:14.4px;height:14.4px;fill:#59636e" viewBox="0 0 16 16"><path d="M2 1.75C2 .784 2.784 0 3.75 0h6.586c.464 0 .909.184 1.237.513l2.914 2.914c.329.328.513.773.513 1.237v9.586A1.75 1.75 0 0 1 13.25 16h-9.5A1.75 1.75 0 0 1 2 14.25Zm1.75-.25a.25.25 0 0 0-.25.25v12.5c0 .138.112.25.25.25h9.5a.25.25 0 0 0 .25-.25V6h-2.75A1.75 1.75 0 0 1 9 4.25V1.5Zm6.75.062V4.25c0 .138.112.25.25.25h2.688l-.011-.013-2.914-2.914-.013-.011Z"/></svg>
<div class="t r" style="left:319.5px;top:595.0px;height:20px;line-height:20px;font-size:12.9px;font-weight:400;color:#1f2328;">05_FigF.ipynb</div>
<div class="t r" style="left:890.3px;top:595.0px;height:20px;line-height:20px;font-size:13.05px;font-weight:400;color:#59636e;">Update Notebook-Qiuyu Gong</div>
<div style="position:absolute;left:282px;top:622.06px;width:800px;height:1px;background:#e3e6ea"></div>
<svg style="position:absolute;left:296px;top:633.82px;width:14.4px;height:14.4px;fill:#59636e" viewBox="0 0 16 16"><path d="M2 1.75C2 .784 2.784 0 3.75 0h6.586c.464 0 .909.184 1.237.513l2.914 2.914c.329.328.513.773.513 1.237v9.586A1.75 1.75 0 0 1 13.25 16h-9.5A1.75 1.75 0 0 1 2 14.25Zm1.75-.25a.25.25 0 0 0-.25.25v12.5c0 .138.112.25.25.25h9.5a.25.25 0 0 0 .25-.25V6h-2.75A1.75 1.75 0 0 1 9 4.25V1.5Zm6.75.062V4.25c0 .138.112.25.25.25h2.688l-.011-.013-2.914-2.914-.013-.011Z"/></svg>
<div class="t r" style="left:319.5px;top:631.32px;height:20px;line-height:20px;font-size:12.9px;font-weight:400;color:#1f2328;">06_FigG.ipynb</div>
<div class="t r" style="left:890.3px;top:631.32px;height:20px;line-height:20px;font-size:13.05px;font-weight:400;color:#59636e;">Update Notebook-Qiuyu Gong</div>
</div>
</body></html>
